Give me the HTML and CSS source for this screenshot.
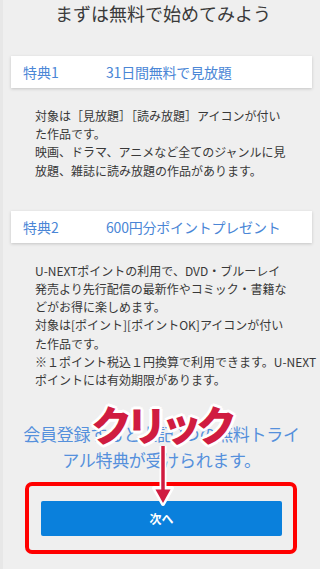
FILE: index.html
```html
<!DOCTYPE html>
<html lang="ja">
<head>
<meta charset="utf-8">
<link rel="stylesheet" href="styles.css">
</head>
<body>
<div class="page">
  <h1 class="title">まずは無料で始めてみよう</h1>

  <div class="card">
    <span class="card-label">特典1</span>
    <span class="card-text">31日間無料で見放題</span>
  </div>
  <p class="desc desc-1">対象は［見放題］［読み放題］アイコンが付い<br>た作品です。<br>映画、ドラマ、アニメなど全てのジャンルに見<br>放題、雑誌に読み放題の作品があります。</p>

  <div class="card card-2">
    <span class="card-label">特典2</span>
    <span class="card-text">600円分ポイントプレゼント</span>
  </div>
  <p class="desc desc-2">U-NEXTポイントの利用で、DVD・ブルーレイ<br>発売より先行配信の最新作やコミック・書籍な<br>どがお得に楽しめます。<br>対象は[ポイント][ポイントOK]アイコンが付い<br>た作品です。<br>※１ポイント税込１円換算で利用できます。U-NEXT<br>ポイントには有効期限があります。</p>

  <div class="cta">
    <p class="cta-text">会員登録すると上記2つの無料トライ<br>アル特典が受けられます。</p>
    <div class="btn-wrap">
      <div class="highlight"></div>
      <button class="btn">次へ</button>
    </div>
    <div class="click-label">クリック</div>
    <svg class="click-arrow" width="24" height="64" viewBox="0 0 24 64">
      <path d="M12 2 V52" stroke="#fff" stroke-width="7" fill="none"/>
      <path d="M3 44 L12 60 L21 44 Z" fill="#fff" stroke="#fff" stroke-width="4" stroke-linejoin="round"/>
      <path d="M12 2 V50" stroke="#d01c40" stroke-width="3.5" fill="none"/>
      <path d="M4.5 45.5 L12 59 L19.5 45.5 Z" fill="#d01c40"/>
    </svg>
  </div>
</div>
</body>
</html>
```

FILE: styles.css
```css
html, body {
  margin: 0;
  padding: 0;
}
body {
  background: #efefef;
  font-family: "Noto Sans CJK JP", "Noto Sans", sans-serif;
  color: #333;
  width: 320px;
  height: 569px;
  overflow: hidden;
  border-left: 3px solid #e7e7e7;
  box-sizing: border-box;
}
.page {
  padding: 0 8px 0 8px;
}
.title {
  margin: 0;
  font-size: 18px;
  font-weight: normal;
  line-height: 27px;
  text-align: center;
  color: #3a3a3a;
  padding-left: 3px;
}
.card {
  margin-top: 29px;
  height: 32px;
  background: #fff;
  box-shadow: 0 1px 3px rgba(0, 0, 0, 0.18);
  display: flex;
  align-items: center;
  padding-left: 12px;
  color: #4a86d6;
  font-size: 14px;
}
.card-label {
  width: 83px;
  flex: none;
}
.card-text {
  letter-spacing: -0.2px;
}
.card-2 {
  margin-top: 31px;
}
.desc {
  margin: 19px 0 0 0;
  padding-left: 24px;
  font-size: 12px;
  line-height: 18.2px;
  white-space: nowrap;
  color: #383838;
}
.cta {
  position: relative;
  margin-top: 32px;
}
.cta-text {
  margin: 0;
  text-align: center;
  font-size: 17px;
  line-height: 26px;
  color: #5590dc;
  font-weight: normal;
  white-space: nowrap;
  letter-spacing: -0.3px;
}
.btn-wrap {
  position: relative;
  margin: 28px 0 0 30px;
  width: 241px;
}
.btn {
  display: block;
  width: 241px;
  height: 35px;
  border: none;
  border-radius: 2px;
  background: #0a80dc;
  color: #fff;
  font-family: "Noto Sans CJK JP", sans-serif;
  font-size: 12px;
  font-weight: bold;
  padding: 0;
}
.highlight {
  position: absolute;
  top: -19px;
  left: -16px;
  right: -15px;
  bottom: -18px;
  border: 4px solid #ff0000;
  border-radius: 7px;
}
.click-label {
  position: absolute;
  top: -24px;
  left: 80px;
  font-size: 41px;
  font-weight: 900;
  line-height: 52px;
  letter-spacing: -6px;
  color: #d01c40;
  white-space: nowrap;
  text-shadow:
    2px 0 0 #fff, -2px 0 0 #fff, 0 2px 0 #fff, 0 -2px 0 #fff,
    2px 2px 0 #fff, -2px -2px 0 #fff, 2px -2px 0 #fff, -2px 2px 0 #fff,
    3px 0 0 #fff, -3px 0 0 #fff, 0 3px 0 #fff, 0 -3px 0 #fff;
}
.click-arrow {
  position: absolute;
  top: 23px;
  left: 140px;
}
```
